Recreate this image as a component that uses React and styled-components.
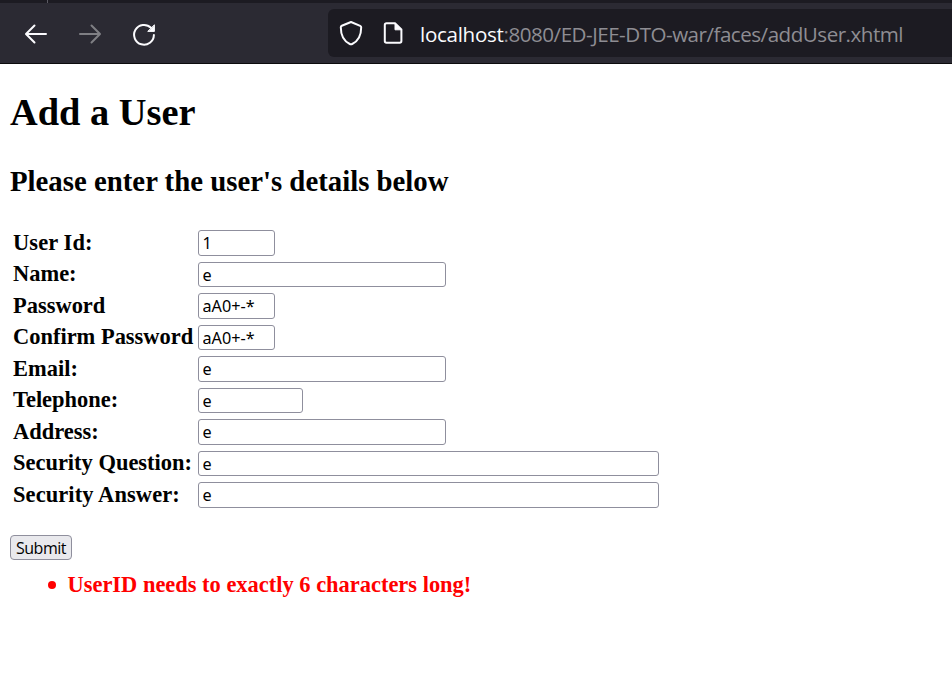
import React from 'react';
import styled, { createGlobalStyle } from 'styled-components';

const GlobalStyle = createGlobalStyle`
  body { margin: 0; background: #fff; color: #000; font-family: "Liberation Serif", "Times New Roman", serif; }
  * { box-sizing: border-box; }
`;

const TabStrip = styled.div`
  height: 3px;
  background: #1c1b22;
  padding-left: 47px;
`;

const TabDivider = styled.div`
  width: 1px;
  height: 3px;
  background: #5b5a63;
`;

const Toolbar = styled.header`
  display: flex;
  align-items: center;
  height: 61px;
  background: #2b2a33;
  border-bottom: 1px solid #0c0c0d;
  overflow: hidden;
`;

const NavButtons = styled.nav`
  display: flex;
  width: 328px;
  padding-left: 22px;
  gap: 26px;
  flex: none;
`;

const NavButton = styled.button`
  width: 28px;
  height: 28px;
  padding: 0;
  border: 0;
  background: none;
  color: ${(p) => (p.disabled ? '#7f7f84' : '#fbfbfe')};

  svg { display: block; }
`;

const AddressBar = styled.div`
  display: flex;
  align-items: center;
  flex: 1;
  height: 48px;
  padding-left: 9px;
  border-radius: 6px 0 0 6px;
  background: #1c1b22;
  color: #fbfbfe;
`;

const BarIcon = styled.svg`
  width: 28px;
  height: 28px;
  flex: none;
  margin-right: 14px;
`;

const Url = styled.span`
  margin-left: -1px;
  padding-top: 2px;
  color: #8e8d93;
  font: 20.6px/28px "Open Sans", "Noto Sans", sans-serif;
  letter-spacing: -0.5px;
  white-space: nowrap;
`;

const Host = styled.span`
  color: #fbfbfe;
  letter-spacing: -0.3px;
`;

const Page = styled.main`
  padding: 25px 10px 0;
`;

const Title = styled.h1`
  margin: 0;
  font-size: 38.4px;
  line-height: 46px;
`;

const Subtitle = styled.h2`
  margin: 29px 0 0;
  font-size: 28.8px;
  line-height: 34px;
`;

const Form = styled.form`
  margin-top: 29.5px;
`;

const Fields = styled.div`
  display: grid;
  grid-template-columns: 188px 1fr;
  grid-auto-rows: 31.5px;
`;

const Label = styled.label`
  padding-left: 3px;
  font-size: 22.46px;
  font-weight: bold;
  line-height: 29px;
  letter-spacing: ${(p) => p.$tracking || 0}px;
  white-space: nowrap;
`;

const Input = styled.input`
  width: ${(p) => p.$width}px;
  height: 25.5px;
  margin-top: 2.75px;
  padding: 0 3.5px 0;
  border: 1px solid #8f8f9d;
  border-radius: 3px;
  background: #fff;
  color: #000;
  font: 16.2px "Noto Sans", "Open Sans", sans-serif;
  outline: none;
`;

const Submit = styled.button`
  display: block;
  width: 62px;
  height: 25px;
  margin-top: 24px;
  padding: 0;
  border: 1px solid #8f8f9d;
  border-radius: 4px;
  background: #e9e9ed;
  color: #000;
  font: 16px/22px "Open Sans", "Noto Sans", sans-serif;
  letter-spacing: -0.5px;
`;

const Messages = styled.ul`
  margin: 12px 0 0;
  padding: 0;
  list-style: none;
`;

const Message = styled.li`
  display: flex;
  align-items: center;
  padding-left: 38px;
  color: #f00;
  font-size: 22.44px;
  font-weight: bold;
  line-height: 26px;

  &::before {
    content: '';
    width: 8px;
    height: 8px;
    margin: 0 11.5px 0 0;
    border-radius: 50%;
    background: #f00;
  }
`;

const fields = [
  ['userId', 'User Id:', '1', 77, 0.1],
  ['name', 'Name:', 'e', 248],
  ['password', 'Password', 'aA0+-*', 77],
  ['confirm', 'Confirm Password', 'aA0+-*', 77],
  ['email', 'Email:', 'e', 248],
  ['telephone', 'Telephone:', 'e', 105],
  ['address', 'Address:', 'e', 248],
  ['question', 'Security Question:', 'e', 461],
  ['answer', 'Security Answer:', 'e', 461, 0.1],
];

const stroke = {
  fill: 'none',
  stroke: 'currentColor',
  strokeWidth: 2,
  strokeLinecap: 'round',
  strokeLinejoin: 'round',
};

export default function App() {
  return (
    <>
      <GlobalStyle />
      <TabStrip><TabDivider /></TabStrip>
      <Toolbar>
        <NavButtons>
          <NavButton aria-label="Back">
            <svg width="28" height="28" viewBox="0 0 28 28" {...stroke}>
              <path d="M24 15H4.5M12.5 6.5L4 15L12.5 23.5" />
            </svg>
          </NavButton>
          <NavButton aria-label="Forward" disabled>
            <svg width="28" height="28" viewBox="0 0 28 28" {...stroke}>
              <path d="M4 15H23.5M15.5 6.5L24 15L15.5 23.5" />
            </svg>
          </NavButton>
          <NavButton aria-label="Reload">
            <svg width="28" height="28" viewBox="0 0 28 28" {...stroke}>
              <path d="M23.9 16A9.9 9.9 0 1 1 21 8.8" />
              <path d="M24.4 6.2V12.4H18.1Z" fill="currentColor" strokeWidth="1" />
            </svg>
          </NavButton>
        </NavButtons>
        <AddressBar>
          <BarIcon viewBox="0 0 28 28" {...stroke}>
            <path d="M14 3L23.2 6.8Q24.2 7.2 24.2 8.3C24.2 15.8 21.6 22 15.2 25Q14 25.6 12.8 25C6.4 22 3.8 15.8 3.8 8.3Q3.8 7.2 4.8 6.8Z" />
          </BarIcon>
          <BarIcon viewBox="0 0 28 28" {...stroke}>
            <path d="M16 4.3H7.5Q5.8 4.3 5.8 6V22Q5.8 23.7 7.5 23.7H20.7Q22.4 23.7 22.4 22V10.5Z" />
            <path d="M16 4.5V10.8H22.3Z" fill="currentColor" strokeWidth="1" />
          </BarIcon>
          <Url><Host>localhost</Host>:8080/ED-JEE-DTO-war/faces/addUser.xhtml</Url>
        </AddressBar>
      </Toolbar>
      <Page>
        <Title>Add a User</Title>
        <Subtitle>Please enter the user's details below</Subtitle>
        <Form onSubmit={(e) => e.preventDefault()}>
          <Fields>
            {fields.map(([id, label, value, width, tracking]) => (
              <React.Fragment key={id}>
                <Label htmlFor={id} $tracking={tracking}>{label}</Label>
                <Input id={id} defaultValue={value} $width={width} spellCheck={false} />
              </React.Fragment>
            ))}
          </Fields>
          <Submit type="submit">Submit</Submit>
        </Form>
        <Messages>
          <Message>UserID needs to exactly 6 characters long!</Message>
        </Messages>
      </Page>
    </>
  );
}
